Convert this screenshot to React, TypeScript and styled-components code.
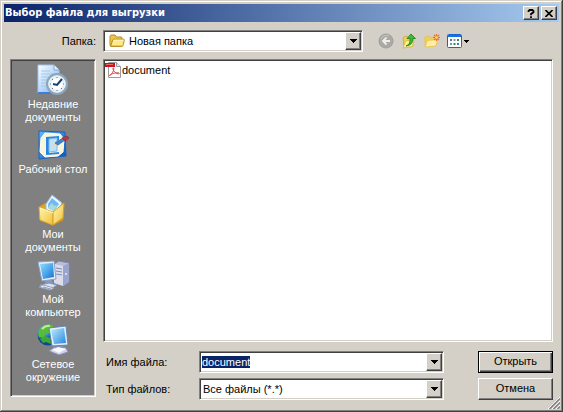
import React, { useEffect, useRef } from "react";
import styled, { createGlobalStyle, css } from "styled-components";

const GlobalStyle = createGlobalStyle`
  * { box-sizing: border-box; }
  body {
    margin: 0;
    background: #d4d0c8;
    color: #000;
    font: 11px/13px "Liberation Sans", Arial, sans-serif;
  }
  button, input, select { font: inherit; color: inherit; }
`;

const raised = css`
  border: 1px solid;
  border-color: #fff #404040 #404040 #fff;
  box-shadow: inset -1px -1px 0 #808080;
  background: #d4d0c8;
`;

const sunken = css`
  border: 1px solid;
  border-color: #808080 #fff #fff #808080;
  box-shadow: inset 1px 1px 0 #404040, inset -1px -1px 0 #d4d0c8;
`;

const Dialog = styled.main`
  position: relative;
  display: flex;
  flex-direction: column;
  min-height: 100vh;
  padding: 4px 4px 12px;
  background: #d4d0c8;
  box-shadow: inset -1px -1px 0 #404040, inset 1px 1px 0 #d4d0c8,
    inset -2px -2px 0 #808080, inset 2px 2px 0 #fff;
`;

const TitleBar = styled.header`
  display: flex;
  align-items: center;
  gap: 2px;
  height: 18px;
  padding: 0 2px 0 1px;
  background: linear-gradient(90deg, #0a246a, #a6caf0);
`;

const Title = styled.h1`
  flex: 1;
  margin: 0;
  color: #fff;
  font: bold 11px/18px "DejaVu Sans Condensed", "DejaVu Sans", sans-serif;
  white-space: nowrap;
`;

const CaptionButton = styled.button`
  ${raised}
  display: grid;
  place-items: center;
  width: 16px;
  height: 14px;
  padding: 0;
`;

const Toolbar = styled.div`
  display: grid;
  grid-template-columns: 86px minmax(0, 1fr) 183px;
  column-gap: 7px;
  align-items: center;
  padding: 8px 6px 7px;
`;

const LookInLabel = styled.label`
  text-align: right;
`;

const Tools = styled.div`
  display: flex;
  align-items: center;
  gap: 7px;
  padding-left: 8px;
`;

const ToolButton = styled.button`
  display: flex;
  align-items: center;
  gap: 2px;
  padding: 0;
  border: 0;
  background: none;
`;

const Combo = styled.div`
  ${sunken}
  display: grid;
  grid-template-columns: auto minmax(0, 1fr) 16px;
  align-items: center;
  height: 22px;
  padding: 1px;
  background: #fff;
`;

const ComboIcon = styled.span`
  display: flex;
  padding: 0 2px 0 4px;
`;

const ComboSelect = styled.select`
  grid-area: 1 / 2 / 2 / 4;
  width: 100%;
  height: 16px;
  padding: 0 18px 0 2px;
  border: 0;
  outline: 0;
  appearance: none;
  background: transparent;
`;

const ComboInput = styled.input`
  grid-area: 1 / 2;
  width: 100%;
  height: 16px;
  padding: 0 1px;
  border: 0;
  outline: 0;
  background: transparent;
  &::selection { background: #0a246a; color: #fff; }
`;

const DropArrow = styled.span`
  ${raised}
  grid-area: 1 / 3;
  display: grid;
  place-items: center;
  height: 100%;
  pointer-events: none;
`;

const DropButton = styled.button`
  ${raised}
  grid-area: 1 / 3;
  display: grid;
  place-items: center;
  height: 100%;
  padding: 0;
`;

const Content = styled.div`
  flex: 1;
  display: grid;
  grid-template-columns: 86px minmax(0, 1fr);
  column-gap: 7px;
  padding: 0 6px;
`;

const Places = styled.nav`
  ${sunken}
  display: flex;
  flex-direction: column;
  margin-bottom: 3px;
  padding: 2px;
  background: #808080;
`;

const Place = styled.button`
  display: flex;
  flex-direction: column;
  align-items: center;
  gap: 2px;
  height: 65px;
  padding: 2px 0 0;
  border: 0;
  background: none;
  color: #fff;
  white-space: pre-line;
`;

const Pane = styled.section`
  display: flex;
  flex-direction: column;
  gap: 9px;
`;

const FileList = styled.ul`
  ${sunken}
  flex: 1;
  margin: 0;
  padding: 2px 1px;
  background: #fff;
  list-style: none;
`;

const FileItem = styled.li`
  display: flex;
  align-items: center;
  gap: 1px;
`;

const Form = styled.form`
  display: grid;
  grid-template-columns: 96px minmax(0, 1fr) 75px;
  gap: 5px 0;
  align-items: center;
`;

const FieldLabel = styled.label`
  padding-left: 3px;
`;

const ActionButton = styled.button<{ $primary?: boolean }>`
  ${raised}
  width: 75px;
  height: 22px;
  padding: 0 0 1px;
  ${(p) =>
    p.$primary &&
    css`
      border-color: #000;
      box-shadow: inset 1px 1px 0 #fff, inset -1px -1px 0 #404040,
        inset -2px -2px 0 #808080;
    `}
`;

const FormField = styled.div`
  margin-right: 34px;
`;

const Grip = styled.svg`
  position: absolute;
  right: 3px;
  bottom: 3px;
`;

const Arrow = () => (
  <svg width="7" height="4" viewBox="0 0 7 4" shapeRendering="crispEdges" aria-hidden>
    <path d="M0 0h7v1H0zM1 1h5v1H1zM2 2h3v1H2zM3 3h1v1H3z" />
  </svg>
);

const FolderIcon = () => (
  <svg width="16" height="16" viewBox="0 0 16 16" aria-hidden>
    <path d="M1 12.500V3.500Q1 2 2.500 2H6l1.500 2H12q1 0 1 1v8H2z" fill="#edc544" stroke="#b58d28" />
    <path d="M1.700 13.500 3.600 7q.3-.8 1.200-.8h9.700q1 0 .8 1l-1.400 5.500q-.3.800-1 .8z" fill="#ffe986" stroke="#b58d28" />
    <path d="M4.700 7.200h9.400" stroke="#fffbd2" />
    <path d="M3 12.600h9.800" stroke="#edc34d" />
  </svg>
);

const BackIcon = () => (
  <svg width="16" height="16" viewBox="0 0 16 16" aria-hidden>
    <circle cx="8" cy="8" r="7" fill="#aaa9a5" stroke="#9e9d98" />
    <path d="M3 6a5.500 5.500 0 0 1 8-3" fill="none" stroke="#c9c8c4" />
    <path d="M12 8H5m3.500-3.500L5 8l3.500 3.500" fill="none" stroke="#eeeeea" strokeWidth="1.800" />
  </svg>
);

const UpIcon = () => (
  <svg width="16" height="16" viewBox="0 0 16 16" aria-hidden>
    <path d="M2 4.500 6 3l1.500 1.500L12 4v9l-9 2z" fill="#f0cf57" stroke="#d4b13b" />
    <path d="m2 15 2.500-7 8.500-1.500-1.500 7z" fill="#fff09a" stroke="#dfbd4d" />
    <path d="M5 13q4.500-1.500 4-7.500H6L10 1l4.500 4.500h-2.700Q12.500 12 5 13z" fill="#3fba32" stroke="#17821b" strokeWidth=".8" />
  </svg>
);

const NewFolderIcon = () => (
  <svg width="16" height="16" viewBox="0 0 16 16" aria-hidden>
    <path d="M1 13V4l4-1 1.500 1.500 5.500-.7V12z" fill="#f2cf57" stroke="#e4bf4c" strokeWidth=".8" />
    <path d="m1 14 2.500-6.500 10-1L12 13z" fill="#fff0a0" stroke="#e7c252" strokeWidth=".8" />
    <path d="M12.500 1v7M9 4.500h7M10 2l5 5m0-5-5 5" stroke="#ed6c35" strokeWidth="1.200" />
    <circle cx="12.500" cy="4.500" r="1.400" fill="#ffd35b" />
  </svg>
);

const ViewsIcon = () => (
  <svg width="15" height="14" viewBox="0 0 15 14" aria-hidden>
    <rect x=".5" y=".5" width="14" height="13" rx="1" fill="#fff" stroke="#1764cf" />
    <path d="M1 1h13v2H1z" fill="#1d70df" />
    <path d="M3 5h2v2H3zm7 4h2v2h-2z" fill="#4b77be" />
    <path d="M6.500 5h2v2h-2zM3 9h2v2H3z" fill="#7298b8" />
    <path d="M10 5h2v2h-2zm-3.500 4h2v2h-2z" fill="#348a62" />
  </svg>
);

const PdfIcon = () => (
  <svg width="16" height="16" viewBox="0 0 16 16" aria-hidden>
    <path d="M3.500.5h8l4 4v11h-12z" fill="#fff" stroke="#9c9c9c" />
    <path d="M11.500.5v4h4" fill="#e7e7e7" stroke="#999" />
    <path d="M0 1h10v4H0z" fill="#d1101d" />
    <path d="M1 2.500h7" stroke="#ec6870" />
    <path d="M5 13.500c2-1.300 4-5 3.800-7 0-1.200-1.300-.9-.9.400.7 2.600 3 4.900 5.700 5 1 0 .9-1.200-.3-1.200-2.800 0-5.300.7-7.800 1.800-1.500.7-1.500 1.500-.5 1" fill="none" stroke="#e23d41" strokeWidth=".9" />
  </svg>
);

const RecentIcon = () => (
  <svg width="32" height="32" viewBox="0 0 32 32" aria-hidden>
    <defs>
      <linearGradient id="recentPaper" x2="1" y2="1"><stop stopColor="#fff" /><stop offset="1" stopColor="#79b2f1" /></linearGradient>
      <radialGradient id="recentClock"><stop offset=".5" stopColor="#fff" /><stop offset="1" stopColor="#aecbe0" /></radialGradient>
    </defs>
    <path d="M1 1h16l5 5v23H1z" fill="url(#recentPaper)" stroke="#9cc7f3" />
    <path d="M17 1v5h5" fill="#e1f1ff" stroke="#76a8df" />
    <path d="M4 7h9M4 10h13M4 13h9M4 16h6M4 19h5M4 22h5" stroke="#a3c9ee" />
    <path d="M1 28h15v2H1z" fill="#397fdc" />
    <circle cx="20" cy="20" r="10" fill="url(#recentClock)" stroke="#8fa5b5" strokeWidth="2" />
    <circle cx="20" cy="20" r="8" fill="none" stroke="#edf8ff" />
    <path d="M20 13v1M20 26v1M13 20h1M26 20h1M15 15l1 1M24 24l1 1M15 25l1-1" stroke="#607b91" />
    <path d="m25 15-5 6-4-1" fill="none" stroke="#153f73" strokeWidth="2" />
  </svg>
);

const DesktopIcon = () => (
  <svg width="32" height="32" viewBox="0 0 32 32" aria-hidden>
    <defs><linearGradient id="desk" x2="1" y2="1"><stop stopColor="#5fb7ff" /><stop offset="1" stopColor="#0752bd" /></linearGradient></defs>
    <path d="m2 2 26 1 1 24-27 3z" fill="url(#desk)" stroke="#1664c8" />
    <path d="m8 4 15 1 4 5-1 13-5 4-13 1-5-5 1-14z" fill="#f7f5dc" stroke="#fffdf0" />
    <path d="m9 8 13-1v4l-2 2V9l-8 1v14l10-1v2L9 26z" fill="#2887e4" />
    <path d="m12 10 8-1v13l-8 1z" fill="#bee2fb" stroke="#7db8e8" />
    <path d="m14 18 4-4 3 2z" fill="#f4d3a0" />
    <path d="m18 14 8-5 2 2-7 5z" fill="#4286c9" stroke="#205c9f" strokeWidth=".7" />
    <path d="m25 9 5-2 2 2-4 3z" fill="#c43143" stroke="#812b42" strokeWidth=".7" />
  </svg>
);

const DocumentsIcon = () => (
  <svg width="32" height="32" viewBox="0 0 32 32" aria-hidden>
    <defs><linearGradient id="docs" x2="1" y2="1"><stop stopColor="#fff7a8" /><stop offset="1" stopColor="#f2bf41" /></linearGradient></defs>
    <path d="m3 12 6-3 3 2 12-3 3 3-1 15-10 5-13-5z" fill="#dda526" stroke="#c59127" />
    <path d="m9 10 6-9 10 8-6 12-10-1z" fill="#e9f7ff" stroke="#94bde0" />
    <path d="m11 10 4-6 7 6-5 7-6-3z" fill="#73b7f3" />
    <path d="m12 12 3-3 2 3 3-1-3 6-6-3z" fill="#a6ddd9" />
    <path d="m2 13 14 5v13L3 26z" fill="url(#docs)" stroke="#e2ae33" />
    <path d="m16 18 11-9-1 15-10 7z" fill="url(#docs)" stroke="#d39c24" />
    <path d="m3 14 13 5" stroke="#fffac1" />
  </svg>
);

const ComputerIcon = () => (
  <svg width="34" height="32" viewBox="0 0 34 32" aria-hidden>
    <defs><linearGradient id="screen" x2="1" y2="1"><stop stopColor="#8be0ff" /><stop offset="1" stopColor="#1671d5" /></linearGradient></defs>
    <path d="m18 5 5-3 10 2v19l-6 4-9-3z" fill="#b8bfdc" stroke="#7e87b2" />
    <path d="m18 5 9 2v20l-9-3z" fill="#d9ddec" />
    <path d="m27 7 6-3v19l-6 4z" fill="#9ba4cd" />
    <path d="m20 9 6 1M20 12l6 1M20 15l6 1" stroke="#7f89b0" />
    <circle cx="30" cy="15" r="1" fill="#e7edff" />
    <path d="m9 20 7 1 1 5H9z" fill="#8699bd" />
    <path d="m4 26 9-2 8 2-6 4-9-1z" fill="#dae2f0" stroke="#8494b6" />
    <path d="m2 3 16-1 2 18-14 2z" fill="#e5eefb" stroke="#8ea1c6" />
    <path d="m4 5 13-1 1 14-11 2z" fill="url(#screen)" />
    <path d="m3 28 4-2 11 3-4 2z" fill="#f2f4fa" stroke="#919ebd" />
    <path d="m7 28 8 2" stroke="#8b98b9" />
  </svg>
);

const NetworkIcon = () => (
  <svg width="32" height="32" viewBox="0 0 32 32" aria-hidden>
    <defs>
      <radialGradient id="globe" cx=".3" cy=".25"><stop stopColor="#91dfff" /><stop offset=".6" stopColor="#268bd9" /><stop offset="1" stopColor="#0b498f" /></radialGradient>
      <linearGradient id="netScreen" x2="1" y2="1"><stop stopColor="#bcecff" /><stop offset="1" stopColor="#2787df" /></linearGradient>
    </defs>
    <circle cx="11" cy="11" r="10.500" fill="url(#globe)" />
    <path d="M3 5Q8-1 15 1l4 3-5 1-2 4-4 1-1 4-5-1Q0 9 3 5z" fill="#58bc35" />
    <path d="m8 12 5 2 1 6-5-2-3 1-3-4z" fill="#41a82e" />
    <path d="M5 5q4-4 8-3" fill="none" stroke="#c3ef91" strokeWidth="2" />
    <path d="m12 27 7-5 10 2 2 4-9 3z" fill="#d1d4eb" stroke="#8b8db3" />
    <path d="m18 19 8 2v6l-8-2z" fill="#8495bd" />
    <path d="m12 4 17-2 2 19-16 1z" fill="#e1effa" stroke="#6286b3" />
    <path d="m14 6 13-2 2 15-12 1z" fill="url(#netScreen)" />
    <path d="m15 26 6-3 8 2-7 4z" fill="#f8f8ff" />
  </svg>
);

const places = [
  { label: "Недавние\nдокументы", Icon: RecentIcon },
  { label: "Рабочий стол", Icon: DesktopIcon },
  { label: "Мои\nдокументы", Icon: DocumentsIcon },
  { label: "Мой\nкомпьютер", Icon: ComputerIcon },
  { label: "Сетевое\nокружение", Icon: NetworkIcon },
];

export default function App() {
  const nameRef = useRef<HTMLInputElement>(null);
  useEffect(() => {
    nameRef.current?.focus();
    nameRef.current?.select();
  }, []);

  return (
    <>
      <GlobalStyle />
      <Dialog>
        <TitleBar>
          <Title>Выбор файла для выгрузки</Title>
          <CaptionButton type="button" aria-label="Справка">
            <svg width="8" height="9" viewBox="0 0 8 9" aria-hidden>
              <path d="M1.500 3V2l1-1h3l1 1v1.200L4 5v1.200M4 7.200V9" fill="none" stroke="#000" strokeWidth="1.800" />
            </svg>
          </CaptionButton>
          <CaptionButton type="button" aria-label="Закрыть">
            <svg width="8" height="7" viewBox="0 0 8 7" aria-hidden>
              <path d="m.5 0 7 7m0-7-7 7" stroke="#000" strokeWidth="1.600" />
            </svg>
          </CaptionButton>
        </TitleBar>

        <Toolbar>
          <LookInLabel htmlFor="folder">Папка:</LookInLabel>
          <Combo>
            <ComboIcon><FolderIcon /></ComboIcon>
            <ComboSelect id="folder"><option>Новая папка</option></ComboSelect>
            <DropArrow><Arrow /></DropArrow>
          </Combo>
          <Tools>
            <ToolButton type="button" aria-label="Назад"><BackIcon /></ToolButton>
            <ToolButton type="button" aria-label="Вверх"><UpIcon /></ToolButton>
            <ToolButton type="button" aria-label="Новая папка"><NewFolderIcon /></ToolButton>
            <ToolButton type="button" aria-label="Вид">
              <ViewsIcon />
              <svg width="5" height="3" viewBox="0 0 5 3" shapeRendering="crispEdges" aria-hidden>
                <path d="M0 0h5v1H0zM1 1h3v1H1zM2 2h1v1H2z" />
              </svg>
            </ToolButton>
          </Tools>
        </Toolbar>

        <Content>
          <Places>
            {places.map(({ label, Icon }) => (
              <Place type="button" key={label}>
                <Icon />
                <span>{label}</span>
              </Place>
            ))}
          </Places>
          <Pane>
            <FileList>
              <FileItem><PdfIcon />document</FileItem>
            </FileList>
            <Form onSubmit={(e) => e.preventDefault()}>
              <FieldLabel htmlFor="name">Имя файла:</FieldLabel>
              <FormField>
                <Combo>
                  <ComboInput id="name" ref={nameRef} defaultValue="document" />
                  <DropButton type="button" aria-label="Список имён"><Arrow /></DropButton>
                </Combo>
              </FormField>
              <ActionButton type="submit" $primary>Открыть</ActionButton>
              <FieldLabel htmlFor="type">Тип файлов:</FieldLabel>
              <FormField>
                <Combo>
                  <ComboSelect id="type"><option>Все файлы (*.*)</option></ComboSelect>
                  <DropArrow><Arrow /></DropArrow>
                </Combo>
              </FormField>
              <ActionButton type="button">Отмена</ActionButton>
            </Form>
          </Pane>
        </Content>
        <Grip width="12" height="12" viewBox="0 0 12 12" aria-hidden>
          <path d="M0 12 12 0M4 12l8-8M8 12l4-4" stroke="#fff" />
          <path d="M1.500 12 12 1.500M5.500 12 12 5.500M9.500 12 12 9.500" stroke="#808080" strokeWidth="1.500" />
        </Grip>
      </Dialog>
    </>
  );
}
